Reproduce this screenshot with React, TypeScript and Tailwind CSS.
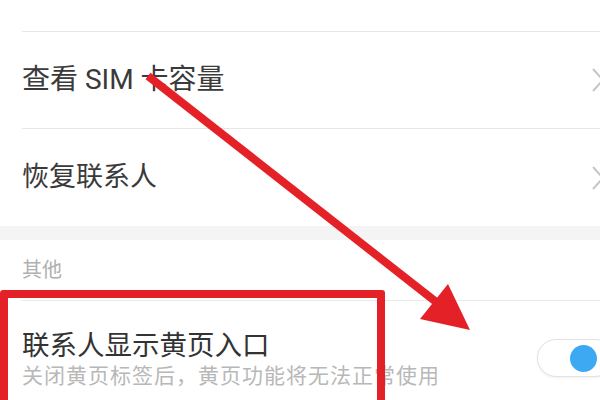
import React from "react";

const font = { fontFamily: 'Roboto, "Noto Sans CJK SC", "Noto Sans", sans-serif' };

function Chevron() {
  return (
    <svg width="16" height="26" viewBox="0 0 16 26" className="mr-[-8px] shrink-0">
      <path d="M3 2 L13 13 L3 24" fill="none" stroke="#c6c6c6" strokeWidth="2" />
    </svg>
  );
}

export default function App() {
  return (
    <div className="relative w-[600px] h-[400px] overflow-hidden bg-white" style={font}>
      <div className="flex flex-col">
        <div className="h-[31px]" />
        <div className="ml-[22px] h-px bg-[#e6e6e6]" />
        <div className="h-[96px] flex items-center justify-between pl-[22px] pr-[2px]">
          <span className="text-[28px] text-[#3a3a3a]">查看 SIM 卡容量</span>
          <Chevron />
        </div>
        <div className="ml-[22px] h-px bg-[#e6e6e6]" />
        <div className="h-[97px] flex items-center justify-between pl-[22px] pr-[2px]">
          <span className="text-[27px] text-[#3a3a3a]">恢复联系人</span>
          <Chevron />
        </div>
        <div className="h-[14px] bg-[#f4f4f4]" />
        <div className="h-[60px] flex items-center pl-[22px]">
          <span className="text-[20px] text-[#b0b0b0]">其他</span>
        </div>
        <div className="ml-[22px] h-px bg-[#e8e8e8]" />
        <div className="flex items-center justify-between pl-[22px] pt-[28px]">
          <div className="flex flex-col">
            <span className="text-[27.5px] leading-[34px] text-[#333]">联系人显示黄页入口</span>
            <span className="text-[21px] leading-[26px] text-[#b8b8b8] tracking-[1px]">
              关闭黄页标签后，黄页功能将无法正常使用
            </span>
          </div>
          <div className="mr-[-14px] mt-[-2px] w-[77px] h-[38px] rounded-full border border-[#e2e2e2] bg-white flex items-center justify-end pr-[16px] shadow-[0_1px_3px_rgba(0,0,0,0.06)]">
            <div className="w-[27px] h-[27px] rounded-full bg-[#3ea9f3]" />
          </div>
        </div>
      </div>

      {/* red highlight box */}
      <div className="absolute left-0 top-[290px] w-[385px] h-[130px] border-[8px] border-[#e52128] rounded-[3px]" />

      {/* red arrow */}
      <svg className="absolute inset-0" width="600" height="400" viewBox="0 0 600 400">
        <line x1="148" y1="76" x2="440" y2="305" stroke="#e52128" strokeWidth="8" />
        <polygon points="470,330 448,284 420,319" fill="#e52128" />
      </svg>
    </div>
  );
}
